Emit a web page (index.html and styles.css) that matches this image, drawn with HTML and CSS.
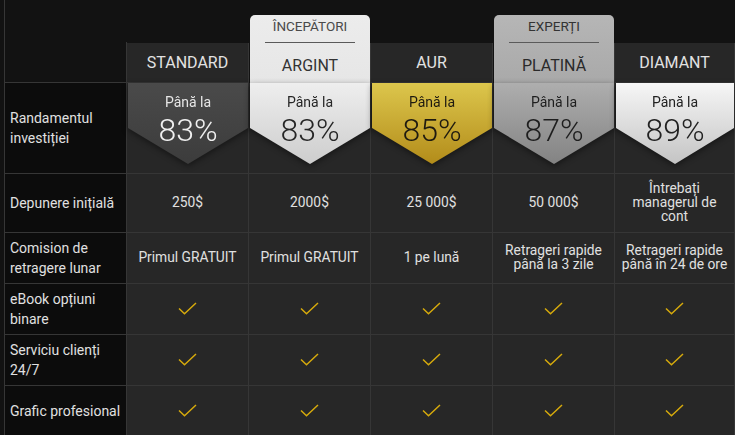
FILE: index.html
```html
<!DOCTYPE html>
<html lang="ro">
<head>
<meta charset="utf-8">
<title>Conturi</title>
<link rel="stylesheet" href="styles.css">
</head>
<body>
<div class="grid">
  <div class="corner"></div>
  <div class="thcell"><div class="th">STANDARD</div></div>
  <div class="thcell"><div class="card card-silver"><div class="tag">ÎNCEPĂTORI</div><div class="rule"></div><div class="name">ARGINT</div></div></div>
  <div class="thcell"><div class="th">AUR</div></div>
  <div class="thcell"><div class="card card-plat"><div class="tag">EXPERȚI</div><div class="rule"></div><div class="name">PLATINĂ</div></div></div>
  <div class="thcell last"><div class="th">DIAMANT</div></div>

  <div class="lbl">Randamentul investiției</div>
  <div class="acell"><div class="aw"><div class="arrow a-std"><div class="upto">Până la</div><div class="pct">83%</div></div></div></div>
  <div class="acell"><div class="aw"><div class="arrow a-silver"><div class="upto">Până la</div><div class="pct">83%</div></div></div></div>
  <div class="acell"><div class="aw"><div class="arrow a-gold"><div class="upto">Până la</div><div class="pct">85%</div></div></div></div>
  <div class="acell"><div class="aw"><div class="arrow a-plat"><div class="upto">Până la</div><div class="pct">87%</div></div></div></div>
  <div class="acell"><div class="aw"><div class="arrow a-diam"><div class="upto">Până la</div><div class="pct">89%</div></div></div></div>

  <div class="lbl">Depunere inițială</div>
  <div class="td">250$</div>
  <div class="td">2000$</div>
  <div class="td">25 000$</div>
  <div class="td">50 000$</div>
  <div class="td">Întrebați<br>managerul de<br>cont</div>

  <div class="lbl">Comision de retragere lunar</div>
  <div class="td">Primul GRATUIT</div>
  <div class="td">Primul GRATUIT</div>
  <div class="td">1 pe lună</div>
  <div class="td">Retrageri rapide<br>până la 3 zile</div>
  <div class="td">Retrageri rapide<br>până în 24 de ore</div>

  <div class="lbl">eBook opțiuni binare</div>
  <div class="td"><svg class="chk" viewBox="0 0 19 13"><polyline points="1,6.5 6.5,11.8 18,1"/></svg></div>
  <div class="td"><svg class="chk" viewBox="0 0 19 13"><polyline points="1,6.5 6.5,11.8 18,1"/></svg></div>
  <div class="td"><svg class="chk" viewBox="0 0 19 13"><polyline points="1,6.5 6.5,11.8 18,1"/></svg></div>
  <div class="td"><svg class="chk" viewBox="0 0 19 13"><polyline points="1,6.5 6.5,11.8 18,1"/></svg></div>
  <div class="td"><svg class="chk" viewBox="0 0 19 13"><polyline points="1,6.5 6.5,11.8 18,1"/></svg></div>

  <div class="lbl">Serviciu clienți 24/7</div>
  <div class="td"><svg class="chk" viewBox="0 0 19 13"><polyline points="1,6.5 6.5,11.8 18,1"/></svg></div>
  <div class="td"><svg class="chk" viewBox="0 0 19 13"><polyline points="1,6.5 6.5,11.8 18,1"/></svg></div>
  <div class="td"><svg class="chk" viewBox="0 0 19 13"><polyline points="1,6.5 6.5,11.8 18,1"/></svg></div>
  <div class="td"><svg class="chk" viewBox="0 0 19 13"><polyline points="1,6.5 6.5,11.8 18,1"/></svg></div>
  <div class="td"><svg class="chk" viewBox="0 0 19 13"><polyline points="1,6.5 6.5,11.8 18,1"/></svg></div>

  <div class="lbl">Grafic profesional</div>
  <div class="td"><svg class="chk" viewBox="0 0 19 13"><polyline points="1,6.5 6.5,11.8 18,1"/></svg></div>
  <div class="td"><svg class="chk" viewBox="0 0 19 13"><polyline points="1,6.5 6.5,11.8 18,1"/></svg></div>
  <div class="td"><svg class="chk" viewBox="0 0 19 13"><polyline points="1,6.5 6.5,11.8 18,1"/></svg></div>
  <div class="td"><svg class="chk" viewBox="0 0 19 13"><polyline points="1,6.5 6.5,11.8 18,1"/></svg></div>
  <div class="td"><svg class="chk" viewBox="0 0 19 13"><polyline points="1,6.5 6.5,11.8 18,1"/></svg></div>
</div>
</body>
</html>
```
FILE: styles.css
```css
* { box-sizing: border-box; }
html, body { margin: 0; padding: 0; }
body {
  background: #121212;
  font-family: Roboto, "Liberation Sans", sans-serif;
  overflow: hidden;
  height: 435px;
}
.grid {
  display: grid;
  grid-template-columns: 122px 122px 122px 122px 122px 120px;
  grid-template-rows: 83px 91px 59px 51px 51px 51px 51px;
  margin-left: 4px;
  border-left: 1px solid #363636;
}
.corner {
  background: linear-gradient(#363636, #363636) right bottom / 1px 40px no-repeat, #121212;
  border-bottom: 1px solid #363636;
}
.thcell {
  display: flex;
  flex-direction: column;
  justify-content: flex-end;
  padding-right: 1px;
  background: linear-gradient(#363636, #363636) right bottom / 1px 40px no-repeat;
}
.th {
  height: 40px;
  border-bottom: 1px solid #363636;
  background: #272727;
  color: #e2e2e2;
  font-size: 16px;
  line-height: 39px;
  text-align: center;
}
.card {
  height: 68px;
  margin-left: 1px;
  border-radius: 5px 5px 0 0;
  padding-top: 3px;
  text-align: center;
  color: #333;
}
.card-silver { background: linear-gradient(#ececec, #e6e6e6); }
.card-plat { background: linear-gradient(#b6b6b6, #a9a9a9); color: #2a2a2a; }
.tag {
  font-size: 13.5px;
  line-height: 16px;
  color: #4a4a4a;
}
.card-plat .tag { color: #333; }
.rule {
  height: 1px;
  margin: 8px 15px 0 15px;
  background: #5a5a5a;
}
.name {
  margin-top: 13px;
  font-size: 16px;
  line-height: 20px;
}
.acell {
  background: #272727;
  border-right: 1px solid #363636;
  border-bottom: 1px solid #363636;
  padding-left: 1px;
}
.aw { filter: drop-shadow(0 2px 3px rgba(0, 0, 0, 0.45)); }
.arrow {
  height: 81px;
  padding-top: 11px;
  text-align: center;
  clip-path: polygon(0 0, 100% 0, 100% 45px, 50% 100%, 0 45px);
  color: #222;
}
.upto { font-size: 14px; line-height: 16px; }
.pct { margin-top: 3px; font-size: 32px; line-height: 34px; font-weight: 300; }
.a-std { background: linear-gradient(#4a4a4a, #3c3c3c); color: #e6e6e6; }
.a-std .pct { color: #f0f0f0; }
.a-silver { background: linear-gradient(#eeeeee, #cdcdcd); color: #262626; }
.a-gold { background: linear-gradient(#dcc64c, #b38c1a); color: #1e1a10; }
.a-plat { background: linear-gradient(#aeaeae, #838383); color: #1e1e1e; }
.a-diam { background: linear-gradient(#f6f6f6, #c4c4c4); color: #222; }
.lbl {
  display: flex;
  align-items: center;
  padding: 0 5px;
  background: #0c0c0c;
  color: #e0e0e0;
  font-size: 14px;
  line-height: 20px;
  border-right: 1px solid #363636;
  border-bottom: 1px solid #363636;
}
.td {
  display: flex;
  align-items: center;
  justify-content: center;
  text-align: center;
  padding: 0 2px 2px;
  background: #272727;
  color: #e0e0e0;
  font-size: 13.8px;
  line-height: 14px;
  border-right: 1px solid #363636;
  border-bottom: 1px solid #363636;
}
.chk {
  width: 19px;
  height: 13px;
  fill: none;
  stroke: #d6aa0c;
  stroke-width: 1.5;
}
```
